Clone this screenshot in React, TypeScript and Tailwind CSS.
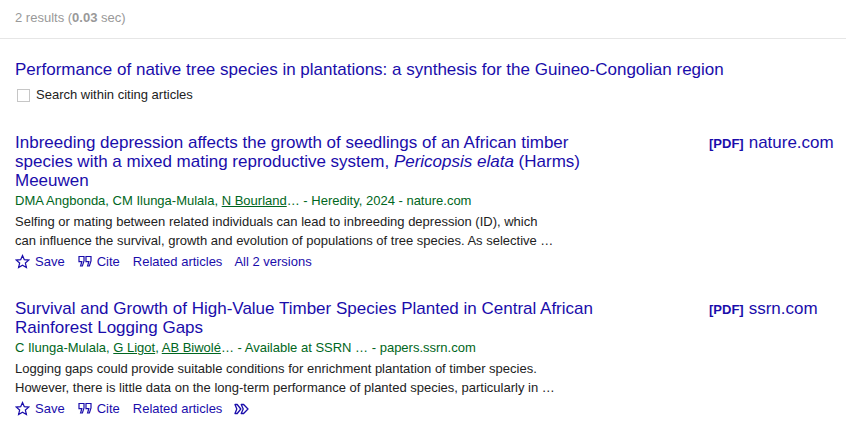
import type { ReactNode } from "react";

const Star = () => (
  <svg width="15" height="15" viewBox="0 0 24 24" className="shrink-0" fill="none" stroke="#1a0dab" strokeWidth="2">
    <path d="M12 2.5l2.9 6.6 7.1.7-5.4 4.7 1.6 7-6.2-3.7-6.2 3.7 1.6-7L2 9.8l7.1-.7z" />
  </svg>
);
const Quote = () => (
  <svg width="14" height="13" viewBox="0 0 14 13" className="shrink-0" fill="none" stroke="#1a0dab" strokeWidth="1.2">
    <path d="M1 1.5h5v4.5L4.4 11H2.6l1.2-4.3H1z" />
    <path d="M8 1.5h5v4.5L11.4 11H9.6l1.2-4.3H8z" />
  </svg>
);
const More = () => (
  <svg width="15" height="12" viewBox="0 0 15 12" className="block" fill="none" stroke="#1a0dab" strokeWidth="1.3" strokeLinejoin="round">
    <path d="M1 1.5h2.2L6.8 6l-3.6 4.5H1L2.8 6z" />
    <path d="M7.2 1.5h2.4L14 6l-4.4 4.5H7.2L9.2 6z" />
  </svg>
);

function Result({ title, host, meta, snippet, last }: { title: ReactNode; host: string; meta: ReactNode; snippet: string[]; last: ReactNode }) {
  return (
    <div className="flex justify-between pl-[15px] pr-[13px]">
      <div className="w-[600px]">
        <div className="text-[17px] leading-[19px] text-[#1a0dab]">{title}</div>
        <div className="text-[13px] leading-[20px] mt-[1px] text-[#006621]">{meta}</div>
        <div className="text-[13px] leading-[19px] mt-[1px] text-[#222222]">
          {snippet.map((s) => <div key={s} className="whitespace-nowrap">{s}</div>)}
        </div>
        <div className="flex items-center h-[21px] mt-[1px] text-[13px] text-[#1a0dab]">
          <span className="flex items-center gap-[5px]"><Star />Save</span>
          <span className="flex items-center gap-[5px] ml-[13px]"><Quote />Cite</span>
          <span className="ml-[13px]">Related articles</span>
          <span className="ml-[12px]">{last}</span>
        </div>
      </div>
      <div className="w-[124px] text-[17px] leading-[19px] text-[#1a0dab] whitespace-nowrap">
        <span className="text-[13px] font-bold mr-[5px]">[PDF]</span>{host}
      </div>
    </div>
  );
}

export default function App() {
  return (
    <div className="w-[846px] h-[427px] overflow-hidden bg-white font-['Liberation_Sans',Arial,sans-serif]">
      <div className="h-[39px] border-b border-[#e6e6e6] pl-[15px] pt-[9px] text-[13px] leading-[17px] text-[#999999]">
        2 results (<b>0.03</b> sec)
      </div>
      <div className="pl-[15px] pt-[21px]">
        <div className="text-[17px] leading-[19px] text-[#1a0dab]">Performance of native tree species in plantations: a synthesis for the Guineo-Congolian region</div>
        <div className="flex items-center mt-[8px] h-[16px] pl-[2px] text-[13px] text-[#222222]">
          <span className="w-[13px] h-[13px] border border-[#c6c6c6] mr-[6px]" />
          Search within citing articles
        </div>
      </div>
      <div className="mt-[30px] flex flex-col gap-[27px]">
        <Result
          title={<>Inbreeding depression affects the growth of seedlings of an African timber<br />species with a mixed mating reproductive system, <i>Pericopsis elata</i> (Harms)<br />Meeuwen</>}
          host="nature.com"
          meta={<>DMA Angbonda, CM Ilunga-Mulala, <u>N Bourland</u>… - Heredity, 2024 - nature.com</>}
          snippet={["Selfing or mating between related individuals can lead to inbreeding depression (ID), which", "can influence the survival, growth and evolution of populations of tree species. As selective …"]}
          last="All 2 versions"
        />
        <Result
          title={<>Survival and Growth of High-Value Timber Species Planted in Central African<br />Rainforest Logging Gaps</>}
          host="ssrn.com"
          meta={<>C Ilunga-Mulala, <u>G Ligot</u>, <u>AB Biwolé</u>… - Available at SSRN … - papers.ssrn.com</>}
          snippet={["Logging gaps could provide suitable conditions for enrichment plantation of timber species.", "However, there is little data on the long-term performance of planted species, particularly in …"]}
          last={<More />}
        />
      </div>
    </div>
  );
}
